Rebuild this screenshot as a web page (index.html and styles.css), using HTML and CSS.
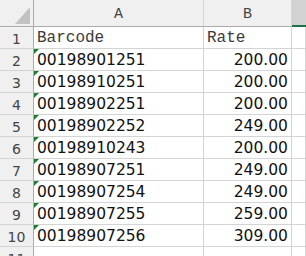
FILE: index.html
```html
<!DOCTYPE html>
<html lang="en">
<head>
    <meta charset="UTF-8">
    <title>Barcode Rates</title>
    <link rel="stylesheet" href="styles.css">
</head>
<body>
    <div class="sheet">
        <div class="corner"><span class="corner-mark"></span></div>
        <div class="col-head">A</div>
        <div class="col-head">B</div>
        <div class="col-head col-sel"></div>

        <div class="row-head">1</div>
        <div class="cell text">Barcode</div>
        <div class="cell text">Rate</div>
        <div class="cell"></div>

        <div class="row-head">2</div>
        <div class="cell num-text">00198901251</div>
        <div class="cell num">200.00</div>
        <div class="cell"></div>

        <div class="row-head">3</div>
        <div class="cell num-text">00198910251</div>
        <div class="cell num">200.00</div>
        <div class="cell"></div>

        <div class="row-head">4</div>
        <div class="cell num-text">00198902251</div>
        <div class="cell num">200.00</div>
        <div class="cell"></div>

        <div class="row-head">5</div>
        <div class="cell num-text">00198902252</div>
        <div class="cell num">249.00</div>
        <div class="cell"></div>

        <div class="row-head">6</div>
        <div class="cell num-text">00198910243</div>
        <div class="cell num">200.00</div>
        <div class="cell"></div>

        <div class="row-head">7</div>
        <div class="cell num-text">00198907251</div>
        <div class="cell num">249.00</div>
        <div class="cell"></div>

        <div class="row-head">8</div>
        <div class="cell num-text">00198907254</div>
        <div class="cell num">249.00</div>
        <div class="cell"></div>

        <div class="row-head">9</div>
        <div class="cell num-text">00198907255</div>
        <div class="cell num">259.00</div>
        <div class="cell"></div>

        <div class="row-head">10</div>
        <div class="cell num-text">00198907256</div>
        <div class="cell num">309.00</div>
        <div class="cell"></div>

        <div class="row-head">11</div>
        <div class="cell"></div>
        <div class="cell"></div>
        <div class="cell"></div>
    </div>
</body>
</html>
```

FILE: styles.css
```css
body {
    margin: 0;
    background-color: #fff;
    overflow: hidden;
}

.sheet {
    display: grid;
    grid-template-columns: 34px 170px 88px 1fr;
    grid-template-rows: 27px repeat(11, 22px);
    width: 306px;
}

.corner {
    background-color: #f0f0f0;
    border-right: 1px solid #ababab;
    border-bottom: 1px solid #ababab;
    position: relative;
}

.corner-mark {
    position: absolute;
    right: 3px;
    bottom: 2px;
    width: 0;
    height: 0;
    border-left: 15px solid transparent;
    border-bottom: 17px solid #c2c2c2;
}

.col-head {
    background-color: #f0f0f0;
    border-right: 1px solid #d4d4d4;
    border-bottom: 1px solid #ababab;
    font-family: "Courier New", "Liberation Mono", monospace;
    font-size: 15px;
    color: #444;
    display: flex;
    align-items: center;
    justify-content: center;
    padding-top: 3px;
}

.col-sel {
    background-color: #d2d2d2;
    border-bottom: 2px solid #217346;
    border-right: none;
}

.row-head {
    background-color: #f0f0f0;
    border-right: 1px solid #ababab;
    border-bottom: 1px solid #d4d4d4;
    font-family: "DejaVu Sans", sans-serif;
    font-size: 14px;
    color: #444;
    display: flex;
    align-items: center;
    justify-content: center;
    padding-top: 2px;
}

.cell {
    border-right: 1px solid #d4d4d4;
    border-bottom: 1px solid #d4d4d4;
    color: #111;
    display: flex;
    align-items: flex-end;
    padding: 0 3px 1px 3px;
    white-space: nowrap;
    position: relative;
}

.text {
    font-family: "Courier New", "Liberation Mono", monospace;
    font-size: 16px;
    color: #3a3a3a;
}

.num-text {
    font-family: "DejaVu Sans", sans-serif;
    font-size: 15.5px;
}

.num-text::before {
    content: "";
    position: absolute;
    left: 0;
    top: 0;
    border-top: 5px solid #1e7b34;
    border-right: 5px solid transparent;
}

.num {
    font-family: "DejaVu Sans", sans-serif;
    font-size: 15.5px;
    justify-content: flex-end;
}
```
